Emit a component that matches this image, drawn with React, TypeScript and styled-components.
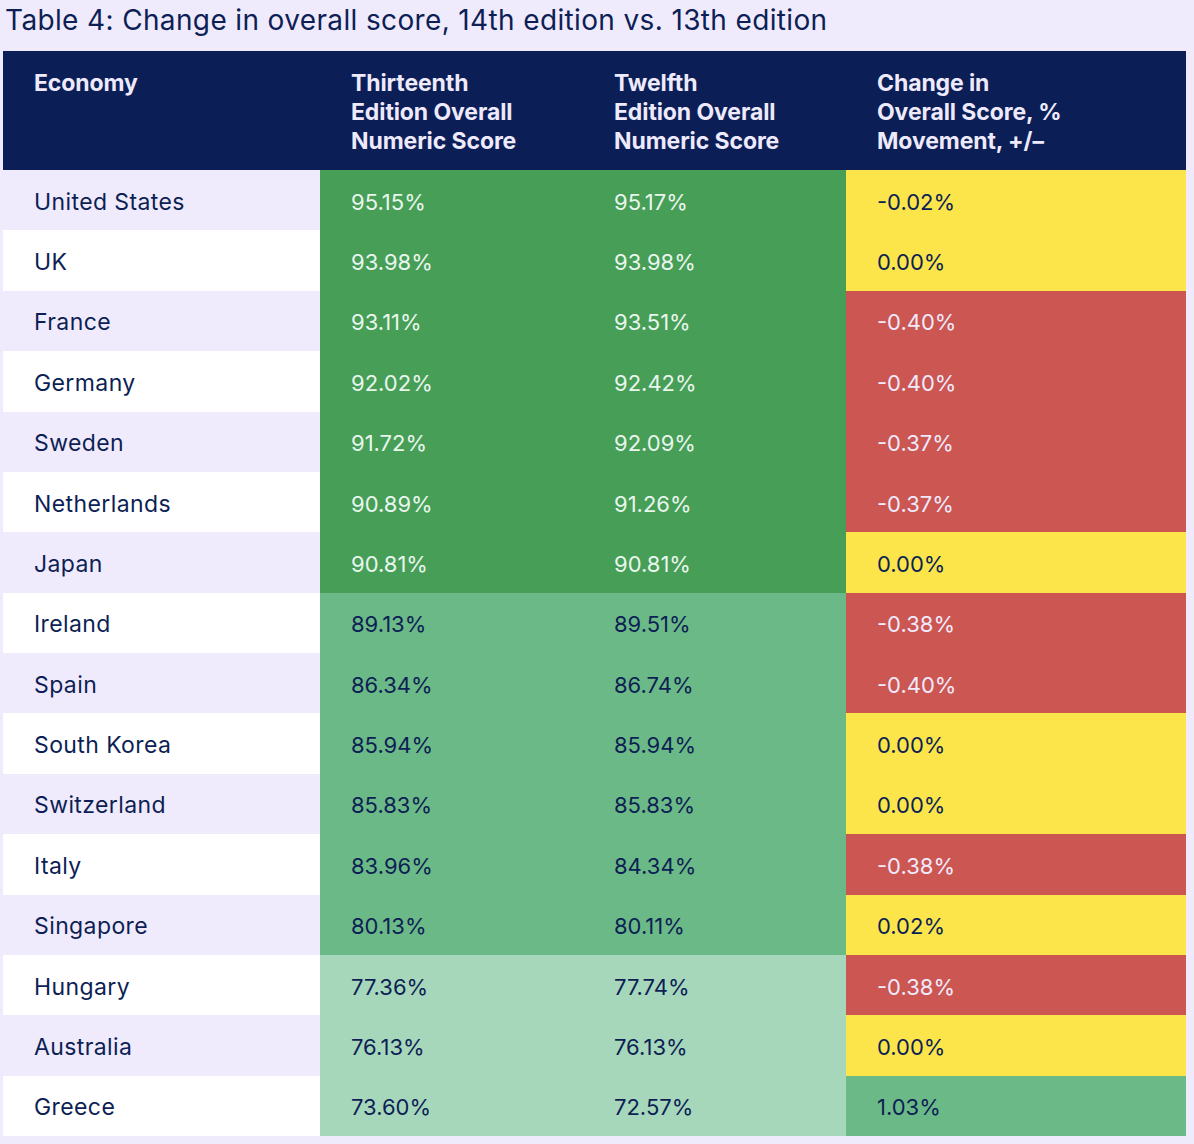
import React from 'react';
import styled, { createGlobalStyle } from 'styled-components';

const GlobalStyle = createGlobalStyle`
  html, body {
    margin: 0;
    padding: 0;
    background: #f0ebfc;
  }
  body {
    font-family: Inter, "Liberation Sans", Arial, sans-serif;
    color: #0d1f54;
  }
`;

type Tone = 'dark' | 'mid' | 'light' | 'yellow' | 'red';

const fills: Record<Tone, { bg: string; fg: string }> = {
  dark: { bg: '#479e57', fg: '#e9f6ee' },
  mid: { bg: '#6bb986', fg: '#0d1f54' },
  light: { bg: '#a6d7bb', fg: '#0d1f54' },
  yellow: { bg: '#fce54b', fg: '#0d1f54' },
  red: { bg: '#cc5651', fg: '#efeafc' },
};

const Page = styled.div`
  width: 1194px;
  height: 1144px;
  padding: 0 8px 0 3px;
  box-sizing: border-box;
  display: flex;
  flex-direction: column;
`;

const Title = styled.h1`
  margin: 0;
  padding-left: 2px;
  height: 51px;
  box-sizing: border-box;
  padding-top: 2px;
  font-size: 28px;
  font-weight: 400;
  letter-spacing: 0.36px;
  line-height: 36px;
  color: #0d1f54;
`;

const Grid = styled.div`
  display: grid;
  grid-template-columns: 317px 263px 263px 340px;
  grid-template-rows: 119px;
  grid-auto-rows: 60.375px;
`;

const HeadCell = styled.div`
  box-sizing: border-box;
  background: #0b1f56;
  color: #eeeafc;
  font-weight: 700;
  font-size: 23px;
  line-height: 29px;
  letter-spacing: -0.1px;
  padding: 18px 10px 0 31px;
`;

const NameCell = styled.div<{ $alt: boolean }>`
  display: flex;
  align-items: center;
  padding: 3px 0 0 31px;
  font-size: 23px;
  letter-spacing: 0.4px;
  background: ${(p) => (p.$alt ? '#ffffff' : '#f0ebfc')};
  color: #0d1f54;
`;

const ValueCell = styled.div<{ $tone: Tone }>`
  display: flex;
  align-items: center;
  padding: 3px 0 0 31px;
  font-size: 22px;
  letter-spacing: 0;
  background: ${(p) => fills[p.$tone].bg};
  color: ${(p) => fills[p.$tone].fg};
`;

type Row = [string, string, string, string, Tone, Tone];

const rows: Row[] = [
  ['United States', '95.15%', '95.17%', '-0.02%', 'dark', 'yellow'],
  ['UK', '93.98%', '93.98%', '0.00%', 'dark', 'yellow'],
  ['France', '93.11%', '93.51%', '-0.40%', 'dark', 'red'],
  ['Germany', '92.02%', '92.42%', '-0.40%', 'dark', 'red'],
  ['Sweden', '91.72%', '92.09%', '-0.37%', 'dark', 'red'],
  ['Netherlands', '90.89%', '91.26%', '-0.37%', 'dark', 'red'],
  ['Japan', '90.81%', '90.81%', '0.00%', 'dark', 'yellow'],
  ['Ireland', '89.13%', '89.51%', '-0.38%', 'mid', 'red'],
  ['Spain', '86.34%', '86.74%', '-0.40%', 'mid', 'red'],
  ['South Korea', '85.94%', '85.94%', '0.00%', 'mid', 'yellow'],
  ['Switzerland', '85.83%', '85.83%', '0.00%', 'mid', 'yellow'],
  ['Italy', '83.96%', '84.34%', '-0.38%', 'mid', 'red'],
  ['Singapore', '80.13%', '80.11%', '0.02%', 'mid', 'yellow'],
  ['Hungary', '77.36%', '77.74%', '-0.38%', 'light', 'red'],
  ['Australia', '76.13%', '76.13%', '0.00%', 'light', 'yellow'],
  ['Greece', '73.60%', '72.57%', '1.03%', 'light', 'mid'],
];

const headers = [
  ['Economy'],
  ['Thirteenth', 'Edition Overall', 'Numeric Score'],
  ['Twelfth', 'Edition Overall', 'Numeric Score'],
  ['Change in', 'Overall Score, %', 'Movement, +/\u2013'],
];

export default function App() {
  return (
    <>
      <GlobalStyle />
      <Page>
        <Title>Table 4: Change in overall score, 14th edition vs. 13th edition</Title>
        <Grid>
          {headers.map((lines, i) => (
            <HeadCell key={i}>
              {lines.map((l, j) => (
                <div key={j}>{l}</div>
              ))}
            </HeadCell>
          ))}
          {rows.map(([name, a, b, c, tone, change], i) => (
            <React.Fragment key={name}>
              <NameCell $alt={i % 2 === 1}>{name}</NameCell>
              <ValueCell $tone={tone}>{a}</ValueCell>
              <ValueCell $tone={tone}>{b}</ValueCell>
              <ValueCell $tone={change}>{c}</ValueCell>
            </React.Fragment>
          ))}
        </Grid>
      </Page>
    </>
  );
}
